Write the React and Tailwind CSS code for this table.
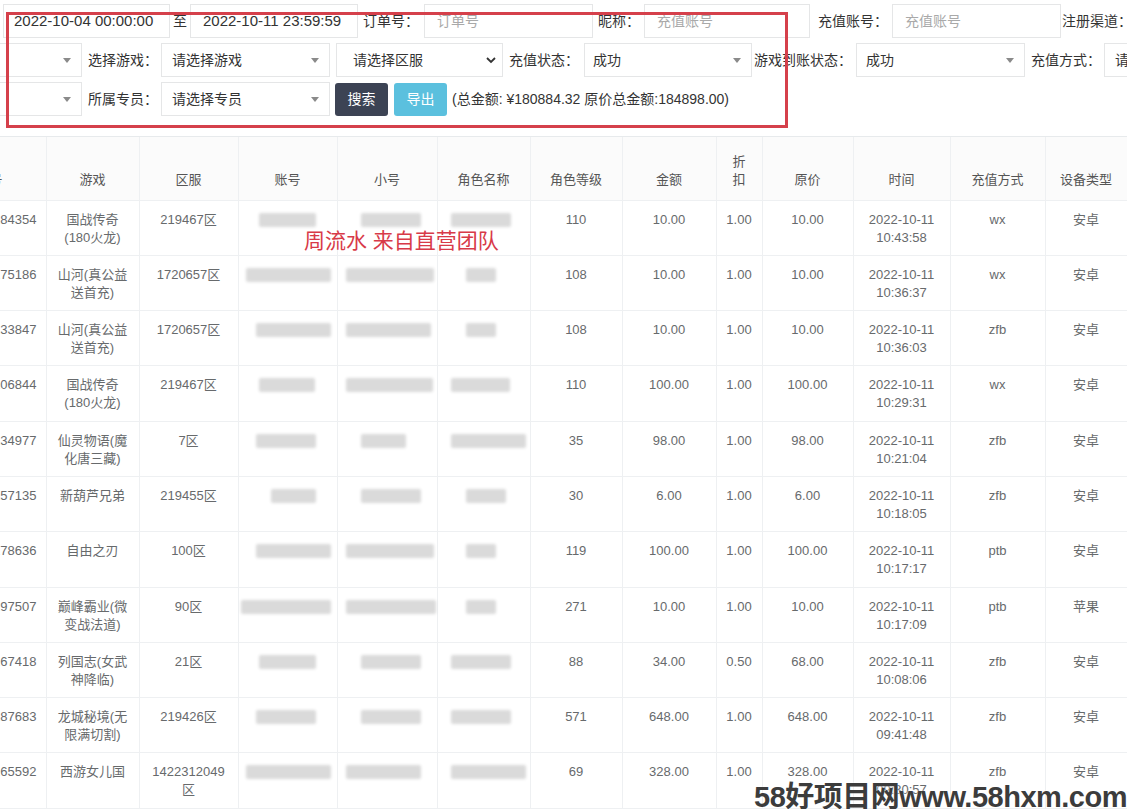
import React from "react";

const rows = [
  ["1665184354", ["国战传奇", "(180火龙)"], ["219467区"], "110", "10.00", "1.00", "10.00", "10:43:58", "wx", "安卓", [20, 57, 23, 60, 13, 60]],
  ["1665175186", ["山河(真公益", "送首充)"], ["1720657区"], "108", "10.00", "1.00", "10.00", "10:36:37", "wx", "安卓", [7, 85, 8, 88, 28, 30]],
  ["1665133847", ["山河(真公益", "送首充)"], ["1720657区"], "108", "10.00", "1.00", "10.00", "10:36:03", "zfb", "安卓", [17, 75, 8, 85, 28, 30]],
  ["1665106844", ["国战传奇", "(180火龙)"], ["219467区"], "110", "100.00", "1.00", "100.00", "10:29:31", "wx", "安卓", [20, 56, 8, 87, 13, 59]],
  ["1665134977", ["仙灵物语(魔", "化唐三藏)"], ["7区"], "35", "98.00", "1.00", "98.00", "10:21:04", "zfb", "安卓", [17, 60, 23, 45, 13, 75]],
  ["1665157135", ["新葫芦兄弟"], ["219455区"], "30", "6.00", "1.00", "6.00", "10:18:05", "zfb", "安卓", [32, 45, 23, 60, 28, 40]],
  ["1665178636", ["自由之刃"], ["100区"], "119", "100.00", "1.00", "100.00", "10:17:17", "ptb", "安卓", [17, 75, 8, 88, 28, 30]],
  ["1665197507", ["巅峰霸业(微", "变战法道)"], ["90区"], "271", "10.00", "1.00", "10.00", "10:17:09", "ptb", "苹果", [2, 90, 8, 90, 28, 30]],
  ["1665167418", ["列国志(女武", "神降临)"], ["21区"], "88", "34.00", "0.50", "68.00", "10:08:06", "zfb", "安卓", [20, 57, 23, 60, 13, 60]],
  ["1665187683", ["龙城秘境(无", "限满切割)"], ["219426区"], "571", "648.00", "1.00", "648.00", "09:41:48", "zfb", "安卓", [17, 60, 23, 60, 13, 60]],
  ["1665165592", ["西游女儿国"], ["1422312049", "区"], "69", "328.00", "1.00", "328.00", "09:30:57", "zfb", "安卓", [7, 85, 8, 75, 13, 75]],
];

const colW = [46, 93, 99, 99, 100, 93, 92, 94, 46, 91, 97, 95, 82];

function Caret() {
  return (
    <svg width="8" height="5" viewBox="0 0 8 5" className="shrink-0">
      <path d="M0 0 L8 0 L4 5 Z" fill="#8a8a8a" />
    </svg>
  );
}

function Chevron() {
  return (
    <svg width="10" height="7" viewBox="0 0 10 7" className="shrink-0">
      <path d="M1 1 L5 5 L9 1" fill="none" stroke="#333" strokeWidth="1.8" />
    </svg>
  );
}

function Input({ w, value, placeholder, pl = "pl-[12px]" }) {
  return (
    <div className={`h-[34px] ${w} shrink-0 border border-[#e5e6e7] bg-white ${pl} flex items-center text-[15px] whitespace-nowrap overflow-hidden`}>
      {value ? <span className="text-[#333]">{value}</span> : <span className="text-[#a9a9a9] text-[14px]">{placeholder}</span>}
    </div>
  );
}

function Select({ w, text, noLeft, chevron, pl = "pl-[10px]", pr = "pr-[10px]", extra = "" }) {
  return (
    <div className={`h-[34px] ${w} shrink-0 border ${noLeft ? "border-l-0" : ""} border-[#e5e6e7] bg-white ${pl} ${pr} flex items-center justify-between text-[14px] text-[#333] whitespace-nowrap overflow-hidden ${extra}`}>
      <span>{text}</span>
      {chevron ? <Chevron /> : <Caret />}
    </div>
  );
}

function Label({ w, ml, children }) {
  return <div className={`${w} ${ml} shrink-0 text-[14px] text-[#333] whitespace-nowrap`}>{children}</div>;
}

function Blur({ off, w }) {
  return (
    <div className="h-[18px] flex items-center">
      <div className="h-[14px] bg-[#dadada] blur-[1.5px] rounded-[2px]" style={{ marginLeft: off, width: w }} />
    </div>
  );
}

export default function App() {
  const td = "border-r border-b border-[#eef0f2] align-top pt-[10px] text-center text-[13px] leading-[18px] text-[#676a6c] h-[55.3px]";
  const th = "border-r border-b border-[#eef0f2] align-bottom pb-[11px] text-center text-[13px] leading-[18px] text-[#555] font-normal";
  return (
    <div className="relative w-[1127px] h-[809px] overflow-hidden bg-white font-['Liberation_Sans','Noto_Sans_CJK_SC',sans-serif]">
      {/* Filters */}
      <div className="h-[137px] pt-[4px] border-b border-[#e7eaec] flex flex-col gap-[5px] overflow-hidden">
        <div className="flex items-center h-[34px]">
          <div className="ml-[3px]"><Input w="w-[167px]" value="2022-10-04 00:00:00" pl="pl-[10px]" /></div>
          <Label w="w-[20px] text-center" ml="">至</Label>
          <Input w="w-[168px]" value="2022-10-11 23:59:59" />
          <Label w="w-[61px]" ml="ml-[5px]">订单号：</Label>
          <Input w="w-[169px]" placeholder="订单号" />
          <Label w="w-[46px]" ml="ml-[5px]">昵称：</Label>
          <Input w="w-[166px]" placeholder="充值账号" />
          <Label w="w-[74px]" ml="ml-[8px]">充值账号：</Label>
          <Input w="w-[169px]" placeholder="充值账号" />
          <Label w="w-[80px]" ml="ml-[1px]">注册渠道：</Label>
        </div>
        <div className="flex items-center h-[34px]">
          <Select w="w-[82px]" text="" noLeft pr="pr-[10px]" />
          <Label w="w-[73px]" ml="ml-[6px]">选择游戏：</Label>
          <Select w="w-[169px]" text="请选择游戏" />
          <Select w="w-[167px]" text="请选择区服" chevron pl="pl-[16px]" pr="pr-[6px]" extra="ml-[6px]" />
          <Label w="w-[75px]" ml="ml-[6px]">充值状态：</Label>
          <Select w="w-[168px]" text="成功" pl="pl-[8px]" />
          <Label w="w-[102px]" ml="ml-[2px]">游戏到账状态：</Label>
          <Select w="w-[169px]" text="成功" pl="pl-[9px]" />
          <Label w="w-[73px]" ml="ml-[6px]">充值方式：</Label>
          <Select w="w-[169px]" text="请选择充值方式" />
        </div>
        <div className="flex items-center h-[34px]">
          <Select w="w-[82px]" text="" noLeft />
          <Label w="w-[73px]" ml="ml-[6px]">所属专员：</Label>
          <Select w="w-[169px]" text="请选择专员" />
          <button className="ml-[5px] w-[53px] h-[33px] rounded-[3px] bg-[#3c4354] text-white text-[14px]">搜索</button>
          <button className="ml-[6px] w-[53px] h-[33px] rounded-[3px] bg-[#5bc0de] text-white text-[14px]">导出</button>
          <div className="ml-[5px] text-[14px] text-[#333] whitespace-nowrap">(总金额: ¥180884.32 原价总金额:184898.00)</div>
        </div>
      </div>

      {/* Table */}
      <table className="table-fixed border-collapse w-[1127px]">
        <colgroup>
          {colW.map((w, i) => (
            <col key={i} style={{ width: w }} />
          ))}
        </colgroup>
        <thead>
          <tr className="h-[63px] bg-[#fbfbfb]">
            <th className={th}>
              <div className="flex justify-end overflow-hidden whitespace-nowrap">
                <span className="shrink-0 mr-[43px]">订单号</span>
              </div>
            </th>
            <th className={th}>游戏</th>
            <th className={th}>区服</th>
            <th className={th}>账号</th>
            <th className={th}>小号</th>
            <th className={th}>角色名称</th>
            <th className={th}>角色等级</th>
            <th className={th}>金额</th>
            <th className={th}>折<br />扣</th>
            <th className={th}>原价</th>
            <th className={th}>时间</th>
            <th className={th}>充值方式</th>
            <th className={th}>设备类型</th>
          </tr>
        </thead>
        <tbody>
          {rows.map((r, i) => (
            <tr key={i}>
              <td className={td}>
                <div className="flex justify-end overflow-hidden whitespace-nowrap pr-[9px]">{r[0]}</div>
              </td>
              <td className={td}>
                {r[1].map((l, j) => (
                  <div key={j}>{l}</div>
                ))}
              </td>
              <td className={td}>
                {r[2].map((l, j) => (
                  <div key={j}>{l}</div>
                ))}
              </td>
              <td className={td}><Blur off={r[10][0]} w={r[10][1]} /></td>
              <td className={td}><Blur off={r[10][2]} w={r[10][3]} /></td>
              <td className={td}><Blur off={r[10][4]} w={r[10][5]} /></td>
              <td className={td}>{r[3]}</td>
              <td className={td}>{r[4]}</td>
              <td className={td}>{r[5]}</td>
              <td className={td}>{r[6]}</td>
              <td className={td}>
                <div>2022-10-11</div>
                <div>{r[7]}</div>
              </td>
              <td className={td}>{r[8]}</td>
              <td className={td}>{r[9]}</td>
            </tr>
          ))}
        </tbody>
      </table>

      {/* Annotations */}
      <div className="absolute left-[6px] top-[12px] w-[782px] h-[116px] border-[3px] border-[#d5404b] pointer-events-none" />
      <div className="absolute left-[304px] top-[227px] text-[21px] leading-[28px] text-[#d83a48] whitespace-nowrap">周流水 来自直营团队</div>
      <div className="absolute right-[0px] bottom-[-6px] text-[29px] leading-[36px] font-bold text-[#3c3c3c] whitespace-nowrap tracking-[-0.5px] [text-shadow:0_0_2px_#fff]">58好项目网www.58hxm.com</div>
    </div>
  );
}
